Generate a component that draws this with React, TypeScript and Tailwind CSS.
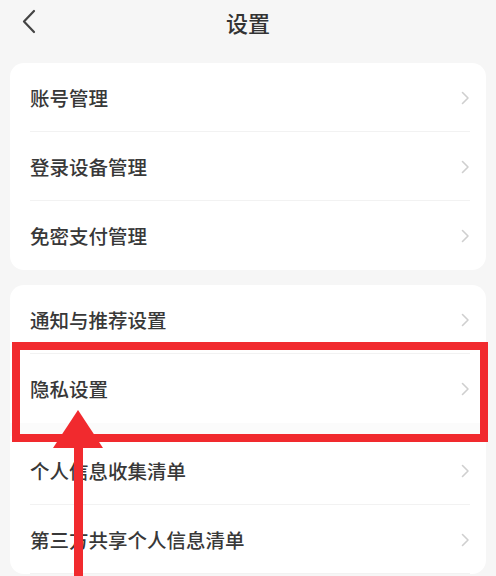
import React from "react";

const cn = "font-['Noto_Sans_CJK_SC','Noto_Sans',sans-serif]";

const Chevron = () => (
  <svg width="9" height="14" viewBox="0 0 9 14" fill="none">
    <path d="M1.5 1.5 L7 7 L1.5 12.5" stroke="#cfcfcf" strokeWidth="1.6" strokeLinecap="round" strokeLinejoin="round" />
  </svg>
);

const Row = ({ label, divider = true }: { label: string; divider?: boolean }) => (
  <div className="relative flex h-[69px] items-center justify-between pl-[20px] pr-[16px]">
    <span className="text-[19.5px] font-medium text-[#383838]">{label}</span>
    <Chevron />
    {divider ? (
      <div className="absolute bottom-0 left-[20px] right-[16px] h-px bg-[#f2f2f2]"></div>
    ) : null}
  </div>
);

const SettingsPage = () => {
  return (
    <div className={`relative h-[576px] w-[496px] overflow-hidden bg-[#f6f6f6] ${cn}`}>
      <div className="relative flex h-[63px] items-start justify-center pt-[6px]">
        <svg className="absolute left-[21px] top-[9px]" width="16" height="25" viewBox="0 0 16 25" fill="none">
          <path d="M13 2 L3 12.5 L13 23" stroke="#444444" strokeWidth="2.2" strokeLinecap="round" strokeLinejoin="round" />
        </svg>
        <span className="text-[22px] font-medium text-[#333333]">设置</span>
      </div>

      <div className="mx-[10px] overflow-hidden rounded-[14px] bg-white">
        <Row label="账号管理" />
        <Row label="登录设备管理" />
        <Row label="免密支付管理" divider={false} />
      </div>

      <div className="mx-[10px] mt-[15px] rounded-[14px] bg-white">
        <Row label="通知与推荐设置" />
        <Row label="隐私设置" divider={false} />
        <div className="h-[13px] bg-[#fbfbfb]"></div>
        <Row label="个人信息收集清单" />
        <Row label="第三方共享个人信息清单" />
      </div>

      <div className="absolute left-[12px] top-[342px] h-[100px] w-[476px] border-[8px] border-[#f12a2e]"></div>

      <svg className="absolute left-0 top-0" width="496" height="576" viewBox="0 0 496 576">
        <polygon points="78,410 103,448 53,448" fill="#f12a2e" />
        <rect x="74" y="446" width="9" height="130" fill="#f12a2e" />
      </svg>
    </div>
  );
};

export default function App() {
  return <SettingsPage />;
}
